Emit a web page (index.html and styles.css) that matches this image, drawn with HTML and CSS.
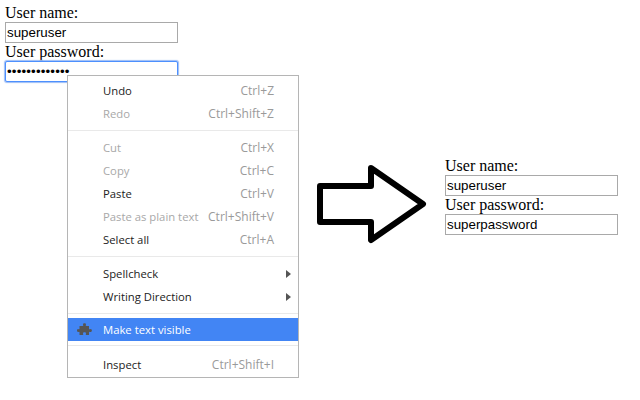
FILE: index.html
```html
<!DOCTYPE html>
<html lang="en">
<head>
    <meta charset="UTF-8">
    <title>Make text visible</title>
    <link rel="stylesheet" href="styles.css">
</head>
<body>
    <div class="page">

        <!-- Before -->
        <form class="login login-before">
            <label>User name:</label>
            <input type="text" value="superuser">
            <label>User password:</label>
            <input class="focused" type="password" value="superpassword">
        </form>

        <!-- Arrow -->
        <svg class="arrow" width="114" height="84" viewBox="0 0 114 84">
            <polygon points="3,24 54,24 54,6 106,42 54,78 54,60 3,60" fill="#fff" stroke="#000" stroke-width="6" stroke-linejoin="round"/>
        </svg>

        <!-- After -->
        <form class="login login-after">
            <label>User name:</label>
            <input type="text" value="superuser">
            <label>User password:</label>
            <input type="text" value="superpassword">
        </form>

        <!-- Context menu -->
        <div class="menu">
            <div class="item"><span>Undo</span><span class="key">Ctrl+Z</span></div>
            <div class="item off"><span>Redo</span><span class="key">Ctrl+Shift+Z</span></div>
            <div class="sep"></div>
            <div class="item off"><span>Cut</span><span class="key">Ctrl+X</span></div>
            <div class="item off"><span>Copy</span><span class="key">Ctrl+C</span></div>
            <div class="item"><span>Paste</span><span class="key">Ctrl+V</span></div>
            <div class="item off"><span>Paste as plain text</span><span class="key">Ctrl+Shift+V</span></div>
            <div class="item"><span>Select all</span><span class="key">Ctrl+A</span></div>
            <div class="sep"></div>
            <div class="item"><span>Spellcheck</span><span class="caret"></span></div>
            <div class="item"><span>Writing Direction</span><span class="caret"></span></div>
            <div class="sep sep-tight"></div>
            <div class="item active">
                <svg class="puzzle" width="16" height="16" viewBox="0 0 16 16">
                    <path d="M6 2.2c0-1.4 3-1.4 3 0 0 .6-.3.9-.3 1.3 0 .3.2.5.6.5h2.7v2.7c0 .4.2.6.5.6.4 0 .7-.3 1.3-.3 1.4 0 1.4 3 0 3-.6 0-.9-.3-1.3-.3-.3 0-.5.2-.5.6V13H9.3c-.4 0-.6-.2-.6-.5 0-.4.3-.7.3-1.3 0-1.4-3-1.4-3 0 0 .6.3.9.3 1.3 0 .3-.2.5-.6.5H2.5v-2.7c0-.4-.2-.6-.5-.6-.4 0-.6.3-1 .3-1.3 0-1.3-3 0-3 .4 0 .6.3 1 .3.3 0 .5-.2.5-.6V4h3.2c.4 0 .6-.2.6-.5 0-.4-.3-.7-.3-1.3z" fill="#555"/>
                </svg>
                <span>Make text visible</span>
            </div>
            <div class="sep sep-low"></div>
            <div class="item"><span>Inspect</span><span class="key">Ctrl+Shift+I</span></div>
        </div>

    </div>
</body>
</html>
```

FILE: styles.css
```css
*{
    box-sizing: border-box;
}

body{
    margin: 0;
    background: #fff;
}

.page{
    position: relative;
    display: flex;
    align-items: flex-start;
    width: 640px;
    height: 400px;
    overflow: hidden;
    padding-left: 5px;
}

.login{
    display: flex;
    flex-direction: column;
    width: 173px;
}

.login-before{
    margin-top: 4px;
}

.login-after{
    margin-top: 157px;
    margin-left: 14px;
}

.login label{
    height: 18px;
    line-height: 18px;
    font-family: "Liberation Serif", serif;
    font-size: 16px;
    color: #000;
}

.login input{
    width: 173px;
    height: 21px;
    margin: 0;
    padding: 1px;
    border: 1px solid #a9a9a9;
    background: #fff;
    font-family: "Liberation Sans", sans-serif;
    font-size: 13.33px;
    color: #000;
    outline: none;
}

.login input.focused{
    border: 1px solid #4d90fe;
    border-radius: 2px;
    box-shadow: 0 0 1px 1px #9dbdf5;
    letter-spacing: 0.15px;
}

.arrow{
    margin-top: 162px;
    margin-left: 139px;
}

.menu{
    position: absolute;
    left: 67px;
    top: 75px;
    width: 232px;
    height: 303px;
    padding-top: 4px;
    background: #fff;
    border: 1px solid #b5b5b5;
    font-family: "Open Sans", sans-serif;
    font-size: 11.3px;
    color: #222;
}

.item{
    display: flex;
    align-items: center;
    justify-content: space-between;
    position: relative;
    height: 23px;
    padding: 0 24px 2px 35px;
}

.item.off{
    color: #a8a8a8;
}

.key{
    font-size: 12px;
    color: #9a9a9a;
}

.item.active{
    padding-bottom: 0;
    background: #4285f4;
    color: #fff;
}

.sep{
    height: 1px;
    margin: 4px 0 6px;
    background: #e9e9e9;
}

.sep-tight{
    margin-bottom: 4px;
}

.sep-low{
    margin-bottom: 8px;
}

.caret{
    position: absolute;
    right: 7px;
    top: 7px;
    border-left: 5px solid #555;
    border-top: 4px solid transparent;
    border-bottom: 4px solid transparent;
}

.puzzle{
    position: absolute;
    left: 9px;
    top: 4px;
}
```
